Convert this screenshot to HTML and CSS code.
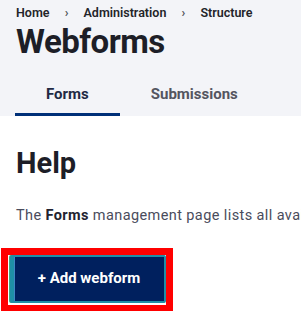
FILE: index.html
```html
<!DOCTYPE html>
<html lang="en">
<head>
    <meta charset="UTF-8">
    <meta name="viewport" content="width=device-width, initial-scale=1.0">
    <title>Webforms</title>
    <link rel="stylesheet" href="styles.css">
</head>
<body>

<div class="page-header">
    <nav class="breadcrumb">
        <a href="#">Home</a>
        <span class="sep">›</span>
        <a href="#">Administration</a>
        <span class="sep">›</span>
        <a href="#">Structure</a>
    </nav>
    <h1>Webforms</h1>
    <ul class="tabs">
        <li class="tab active"><a href="#">Forms</a></li>
        <li class="tab"><a href="#">Submissions</a></li>
    </ul>
</div>

<div class="content">
    <h2>Help</h2>
    <p class="help-text">The <strong>Forms</strong> management page lists all available webforms, which can be filtered.</p>

    <div class="highlight">
        <button class="add-button">+ Add webform</button>
    </div>
</div>

</body>
</html>
```

FILE: styles.css
```css
body {
    font-family: Roboto, "Liberation Sans", sans-serif;
    background-color: #ffffff;
    color: #222330;
    margin: 0;
    padding: 0;
    overflow: hidden;
}
a {
    color: inherit;
    text-decoration: none;
}
.page-header {
    background-color: #f3f4f8;
    padding: 0 16px;
}
.breadcrumb {
    display: flex;
    padding-top: 5px;
    font-size: 12.5px;
    line-height: 16px;
    font-weight: 600;
    color: #232429;
    white-space: nowrap;
}
.breadcrumb .sep {
    width: 34px;
    text-align: center;
    font-weight: 700;
    color: #55565b;
}
.page-header h1 {
    margin: 3px 0 0;
    font-size: 33px;
    line-height: 36px;
    font-weight: 700;
    letter-spacing: -0.5px;
    color: #1d1e27;
}
.tabs {
    list-style: none;
    margin: 0 0 0 -1px;
    padding: 0;
    display: flex;
}
.tab a {
    display: block;
    padding: 24px 31px 9px;
    font-size: 15px;
    line-height: 20px;
    font-weight: 700;
    color: #545560;
    border-bottom: 3px solid transparent;
}
.tab.active a {
    color: #1f2a44;
    border-bottom-color: #003078;
}
.content {
    padding: 0 16px;
}
.content h2 {
    margin: 30px 0 0;
    font-size: 29px;
    line-height: 34px;
    font-weight: 700;
    color: #1d1e27;
}
.help-text {
    margin: 26px 0 0;
    font-size: 14.5px;
    line-height: 20px;
    letter-spacing: 0.4px;
    color: #4a4c5c;
    white-space: nowrap;
}
.help-text strong {
    color: #222330;
}
.highlight {
    display: inline-block;
    margin: 22px 0 0 -15px;
    border: 7px solid #ff0000;
    border-bottom-width: 6px;
    padding: 0 0 2px 2px;
}
.add-button {
    display: block;
    width: 156px;
    height: 48px;
    background-color: #00205e;
    color: #ffffff;
    font-family: Roboto, "Liberation Sans", sans-serif;
    font-size: 15px;
    font-weight: 700;
    border: 2px solid #1f8fa6;
    border-left: 4px solid #1f8fa6;
    box-shadow: inset 1px 0 0 #3e86c4, -1px 0 0 #3fae7f;
    border-radius: 2px;
    padding: 0 0 2px;
    cursor: pointer;
}
```
